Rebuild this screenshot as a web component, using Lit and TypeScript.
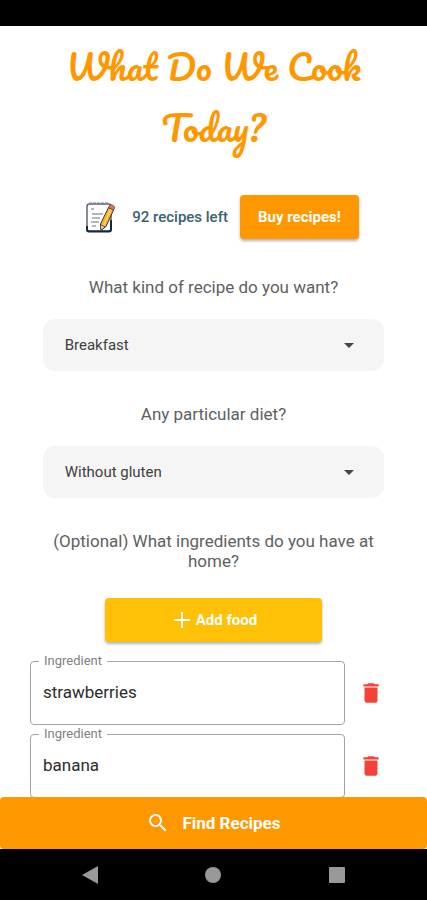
import { LitElement, html, css, svg } from "lit";
import { customElement, property, state } from "lit/decorators.js";

@customElement("ingredient-field")
class IngredientField extends LitElement {
  @property() value = "";

  static styles = css`
    :host {
      display: flex;
      align-items: center;
    }
    .field {
      position: relative;
      flex: 1;
      min-width: 0;
    }
    .label {
      position: absolute;
      top: -8px;
      left: 9px;
      padding: 0 5px;
      background: #fff;
      color: #808080;
      font-size: 13px;
      line-height: 16px;
    }
    .input {
      display: block;
      box-sizing: border-box;
      width: 100%;
      height: 64px;
      padding: 0 12px 2px;
      border: 1px solid #a4a4a4;
      border-radius: 4px;
      background: none;
      color: #2c2c2c;
      font: inherit;
      font-size: 17px;
    }
    .remove {
      display: flex;
      justify-content: center;
      width: 52px;
      padding: 12px 0;
      border: 0;
      background: none;
      color: #f44336;
    }
    .icon {
      width: 26px;
      height: 26px;
      fill: currentColor;
    }
  `;

  render() {
    return html`
      <div class="field">
        <input class="input" id="name" type="text" .value=${this.value} />
        <label class="label" for="name">Ingredient</label>
      </div>
      <button
        class="remove"
        type="button"
        aria-label="Remove ingredient"
        @click=${() => this.dispatchEvent(new CustomEvent("remove"))}
      >
        <svg class="icon" viewBox="0 0 24 24" aria-hidden="true">
          <path d="M6 19c0 1.100.9 2 2 2h8c1.100 0 2-.9 2-2V7H6v12zM19 4h-3.500l-1-1h-5l-1 1H5v2h14V4z" />
        </svg>
      </button>
    `;
  }
}

const notepad = svg`
  <rect x="3" y="3" width="24" height="27" rx="2.500" fill="#fff" stroke="#5b6877" stroke-width="1.500" />
  <path d="M3 25v3.500a2 2 0 0 0 2 2h20a2 2 0 0 0 2-2V19" fill="none" stroke="#14283f" stroke-width="2" />
  <path d="M5 2.500h20" stroke="#7d848c" stroke-width="2" stroke-dasharray="3 1" />
  <path d="M7 8h3M8 13h11M8 17h8M7 21h8M8 25h4" stroke="#9a9fa5" stroke-width="1.500" />
  <path d="M24.500 6.500l5 2.500-7.500 16.500-5 4-.5-6.500z" fill="#f7b32b" stroke="#3a3440" stroke-width="1" />
  <path d="M27 8l-7.500 16.500" stroke="#ffd768" stroke-width="1.500" />
  <path d="M16.500 23.500l4.500 2.500-4.200 3.500z" fill="#f3d3a4" stroke="#27394f" stroke-width=".8" />
  <path d="M24.500 6.500l1-2c1-2 6 .5 5 2.500l-1 2z" fill="#e8705a" stroke="#6b3a3c" stroke-width=".8" />
`;

@customElement("app-root")
class AppRoot extends LitElement {
  @state() private ingredients = ["strawberries", "banana"];

  static styles = css`
    :host {
      display: flex;
      flex-direction: column;
      height: 100vh;
      background: #fff;
      color: #606060;
      font-family: Roboto, "Liberation Sans", sans-serif;
      font-size: 17px;
      line-height: 20px;
    }
    .status {
      flex: none;
      height: 26px;
      background: #000;
    }
    .content {
      flex: 1;
      min-height: 0;
      overflow-y: auto;
      scrollbar-width: none;
      display: flex;
      flex-direction: column;
      align-items: center;
    }
    .content > * {
      flex: none;
    }
    .title {
      margin: 10px 48px 0;
      color: #ff9800;
      font-family: Pacifico, Lato, sans-serif;
      font-weight: 400;
      font-size: 35px;
      line-height: 61px;
      text-align: center;
    }
    .credits {
      display: flex;
      align-items: center;
      margin: 37px 0 5px;
      padding-left: 16px;
    }
    .notepad {
      width: 32px;
      height: 32px;
      margin-right: 16px;
    }
    .left {
      margin-right: 12px;
      color: #3a6270;
      font-size: 15px;
      font-weight: 500;
    }
    .button {
      display: flex;
      align-items: center;
      justify-content: center;
      height: 44px;
      border: 0;
      border-radius: 4px;
      color: #fff;
      font: inherit;
      font-size: 15px;
      font-weight: 700;
      box-shadow: 0 2px 3px rgba(0, 0, 0, 0.3);
    }
    .buy {
      padding: 0 18px;
      background: #ff9800;
    }
    .question {
      margin: 33px 44px 22px;
      text-align: center;
    }
    .picker {
      position: relative;
      width: 80%;
    }
    .select {
      appearance: none;
      display: block;
      width: 100%;
      height: 52px;
      padding: 0 22px;
      border: 0;
      border-radius: 12px;
      background: #f5f5f5;
      color: #404040;
      font: inherit;
      font-size: 15px;
    }
    .arrow {
      position: absolute;
      top: 14px;
      right: 23px;
      width: 24px;
      height: 24px;
      fill: #444;
      pointer-events: none;
    }
    .add {
      gap: 2px;
      width: 51%;
      margin: 5px 0 19px;
      background: #ffc107;
    }
    .icon {
      width: 24px;
      height: 24px;
      fill: currentColor;
    }
    .list {
      display: flex;
      flex-direction: column;
      gap: 9px;
      box-sizing: border-box;
      width: 100%;
      padding: 0 30px;
    }
    .find {
      flex: none;
      gap: 12px;
      width: 100%;
      height: 52px;
      background: #ff9800;
      font-size: 17px;
      box-shadow: none;
    }
    .nav {
      flex: none;
      display: flex;
      justify-content: space-around;
      align-items: center;
      height: 51px;
      padding: 0 28px;
      background: #000;
    }
    .key {
      display: flex;
      padding: 8px;
      border: 0;
      background: none;
      color: #999;
    }
    .glyph {
      width: 18px;
      height: 18px;
      fill: currentColor;
    }
  `;

  private picker(id: string, question: string, options: string[]) {
    return html`
      <label class="question" for=${id}>${question}</label>
      <div class="picker">
        <select class="select" id=${id}>
          ${options.map((o) => html`<option>${o}</option>`)}
        </select>
        <svg class="arrow" viewBox="0 0 24 24" aria-hidden="true"><path d="M7 10l5 5 5-5z" /></svg>
      </div>
    `;
  }

  private key(name: string, shape: unknown) {
    return html`
      <button class="key" type="button" aria-label=${name}>
        <svg class="glyph" viewBox="0 0 18 18" aria-hidden="true">${shape}</svg>
      </button>
    `;
  }

  render() {
    return html`
      <div class="status"></div>
      <main class="content">
        <h1 class="title">What Do We Cook Today?</h1>
        <div class="credits">
          <svg class="notepad" viewBox="0 0 32 32" aria-hidden="true">${notepad}</svg>
          <span class="left">92 recipes left</span>
          <button class="button buy" type="button">Buy recipes!</button>
        </div>
        ${this.picker("kind", "What kind of recipe do you want?", ["Breakfast"])}
        ${this.picker("diet", "Any particular diet?", ["Without gluten"])}
        <div class="question">(Optional) What ingredients do you have at home?</div>
        <button
          class="button add"
          type="button"
          @click=${() => (this.ingredients = [...this.ingredients, ""])}
        >
          <svg class="icon" viewBox="0 0 24 24" aria-hidden="true">
            <path d="M20 13h-7v7h-2v-7H4v-2h7V4h2v7h7z" />
          </svg>
          Add food
        </button>
        <div class="list">
          ${this.ingredients.map(
            (name, i) => html`
              <ingredient-field
                .value=${name}
                @remove=${() => (this.ingredients = this.ingredients.filter((_, j) => j !== i))}
              ></ingredient-field>
            `
          )}
        </div>
      </main>
      <button class="button find" type="button">
        <svg class="icon" viewBox="0 0 24 24" aria-hidden="true">
          <path
            d="M15.500 14h-.79l-.28-.27A6.471 6.471 0 0 0 16 9.500 6.500 6.500 0 1 0 9.500 16c1.610 0 3.090-.59 4.230-1.570l.27.28v.79l5 4.990L20.490 19l-4.990-5zm-6 0C7.010 14 5 11.990 5 9.500S7.010 5 9.500 5 14 7.010 14 9.500 11.990 14 9.500 14z"
          />
        </svg>
        Find Recipes
      </button>
      <nav class="nav">
        ${this.key("Back", svg`<path d="M1 9L17 0v18z" />`)}
        ${this.key("Home", svg`<circle cx="9" cy="9" r="8" />`)}
        ${this.key("Recent apps", svg`<rect x="1" y="1" width="16" height="16" rx="1" />`)}
      </nav>
    `;
  }
}
